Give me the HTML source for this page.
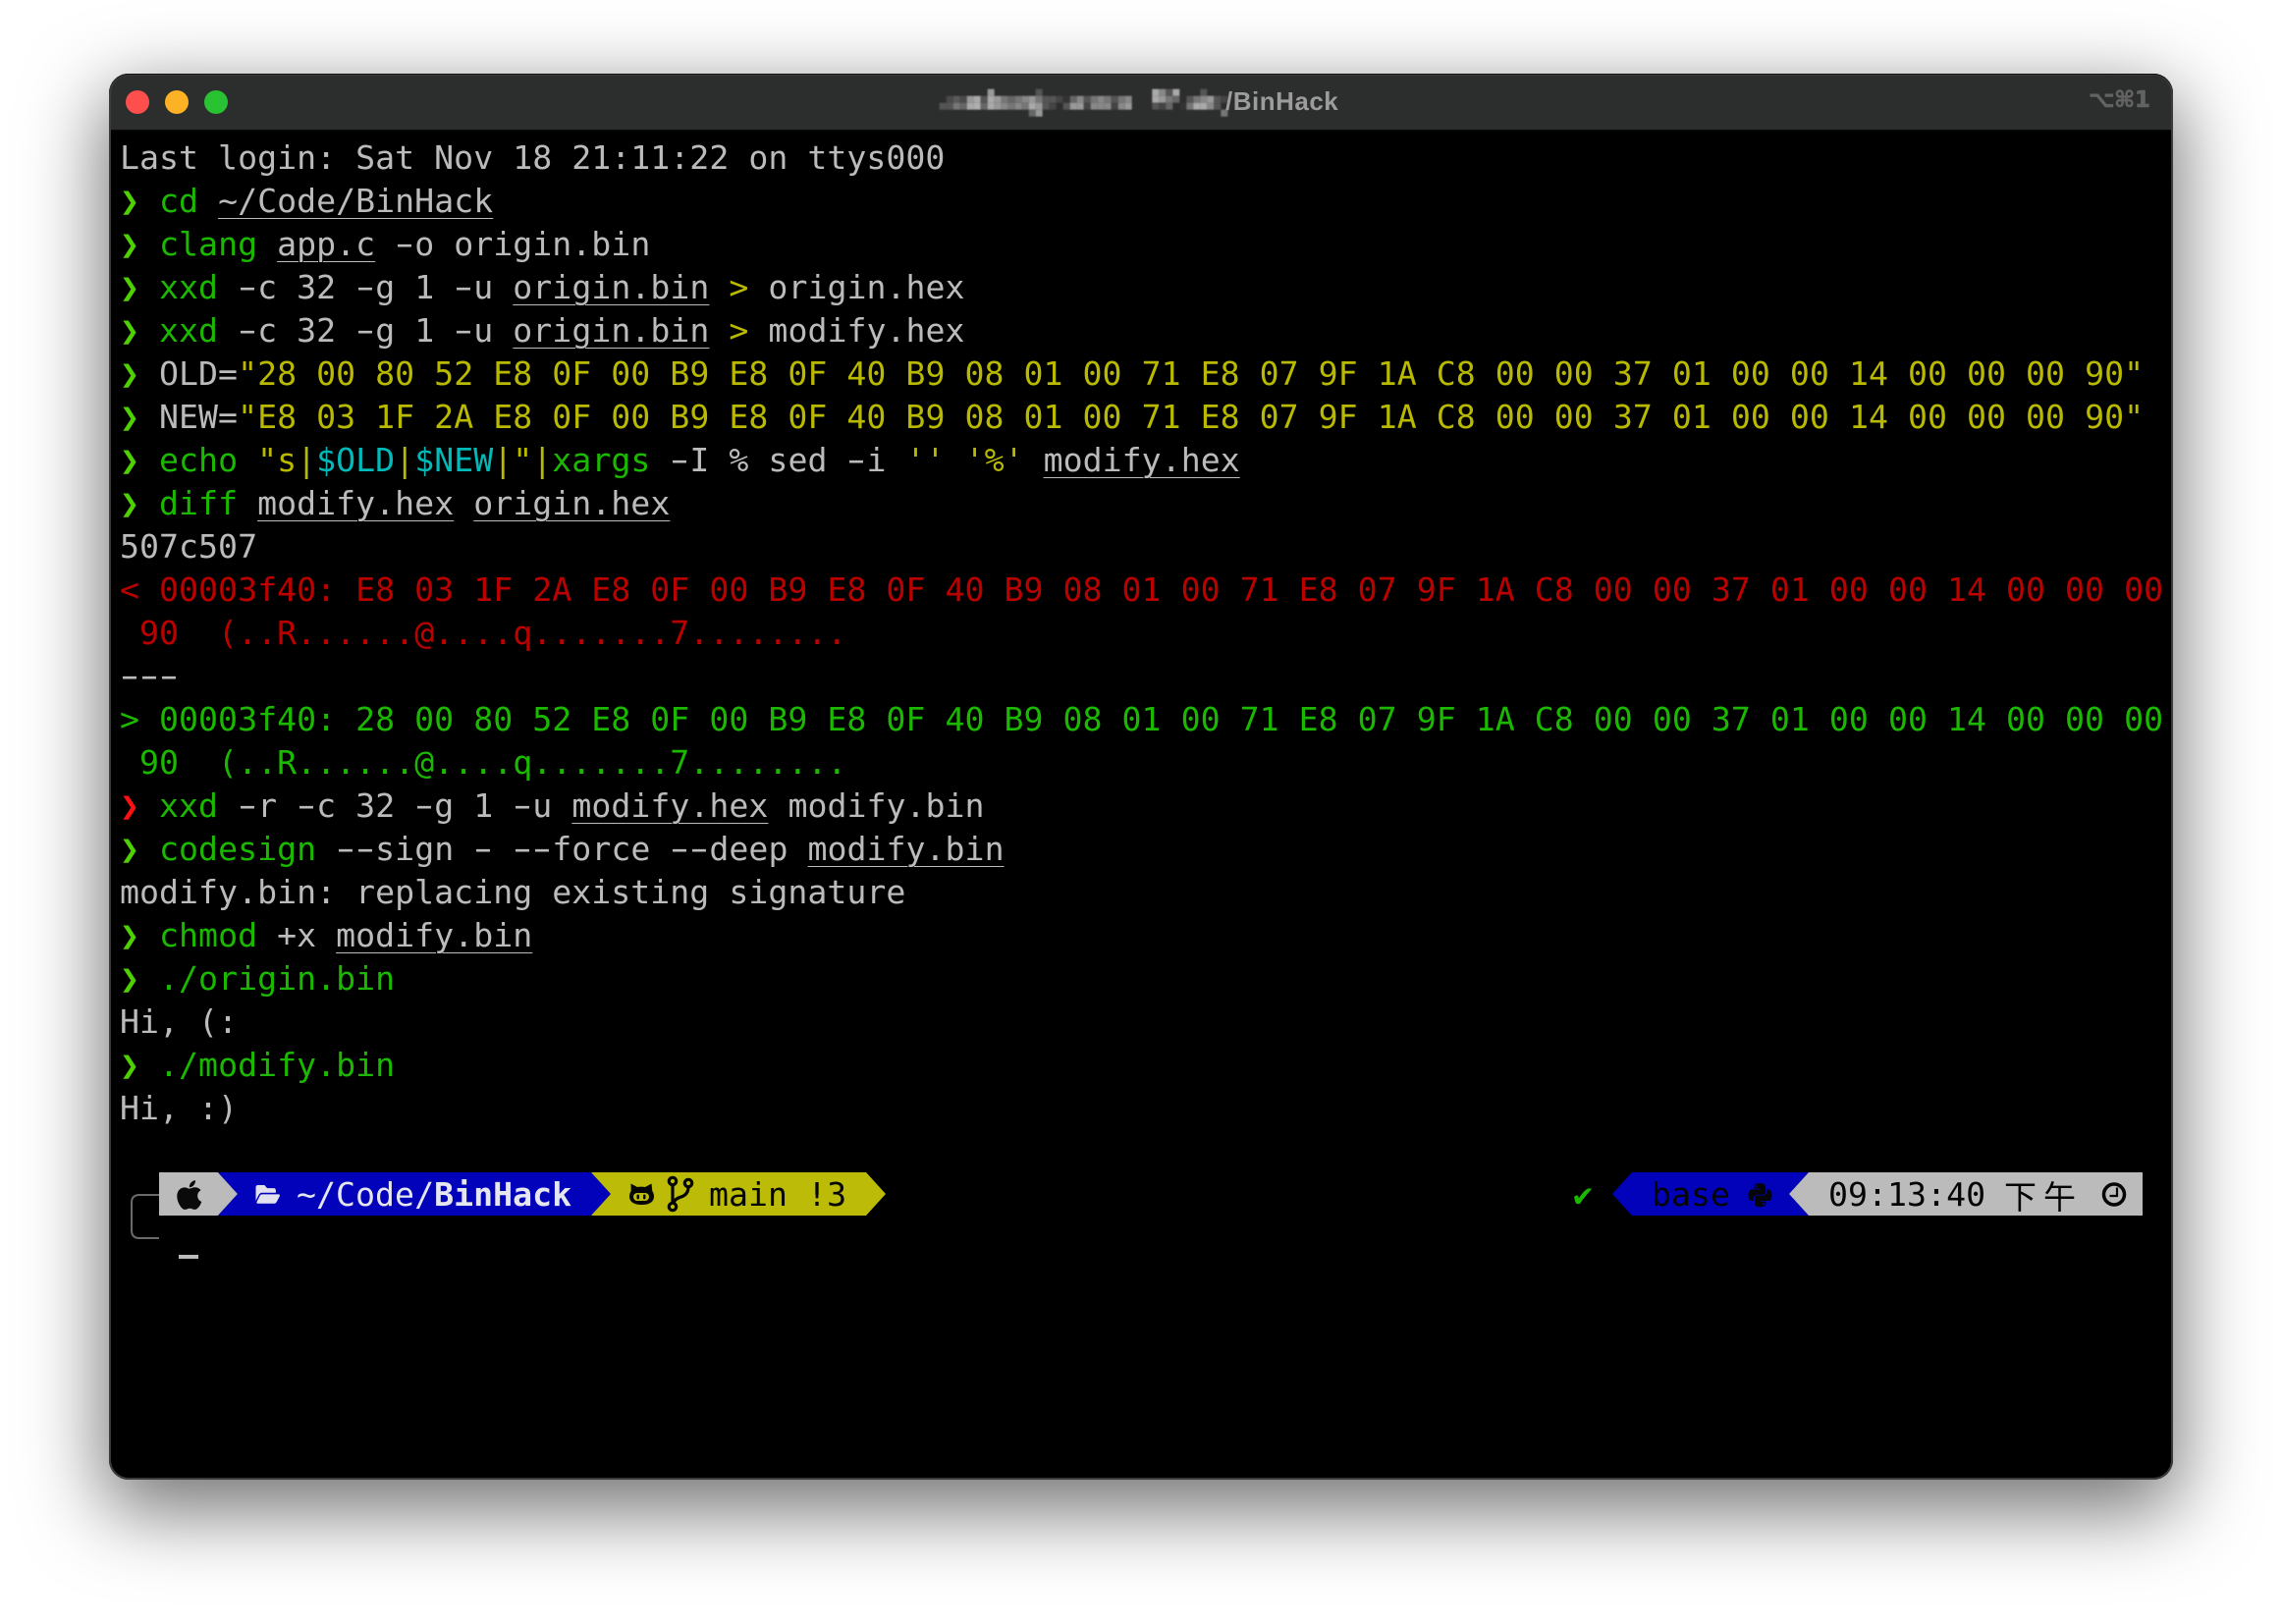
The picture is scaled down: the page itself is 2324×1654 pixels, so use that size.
<!DOCTYPE html>
<html lang="en"><head><meta charset="utf-8"><title>Terminal</title>
<style>
html,body{margin:0;padding:0;width:2324px;height:1654px;background:#fff;overflow:hidden}
#win{position:absolute;left:111px;top:75px;width:2102px;height:1432px;border-radius:20px;background:#000;box-shadow:0 26px 80px 6px rgba(0,0,0,.55)}
#bar{position:absolute;left:0;top:0;width:2102px;height:57px;background:#2c2d2d;border-radius:20px 20px 0 0;border-bottom:1px solid #0b0b0b;box-sizing:content-box}
#edge{position:absolute;left:0;top:0;width:2102px;height:1432px;border-radius:20px;box-shadow:inset 0 1px 0 #111,inset 0 0 0 2px #3b3b3b;pointer-events:none}
.dot{position:absolute;width:24px;height:24px;border-radius:50%;top:17px}
#title{position:absolute;left:1248px;top:86px;font:600 26px/34px "Liberation Sans",sans-serif;color:#9c9c9c;letter-spacing:.5px;white-space:pre}
#kbd{position:absolute;left:2127px;top:85px;font:700 23px/34px "DejaVu Sans","Liberation Sans",sans-serif;color:#626262;white-space:pre;letter-spacing:-.5px;-webkit-text-stroke:.6px #626262}
pre,.t{font-family:"DejaVu Sans Mono","Liberation Mono",monospace;font-size:33.2px;line-height:44px;letter-spacing:.03px;color:#bbb;margin:0;white-space:pre}
#term{position:absolute;left:122px;top:139px}
.t{position:absolute;top:1195px}
.g{color:#1bb800}.y{color:#b9b900}.r{color:#bb0000}.c{color:#00b9b9}
.p{color:#4fd000}.pr{color:#ff1010}
.u{text-decoration:underline;text-decoration-thickness:1px;text-underline-offset:6px}
i{font-style:normal;display:inline-block;transform:scaleX(1.65) translateY(-1px)}
.m rect{width:7px;height:7px}
svg{position:absolute;overflow:visible}
</style></head><body>
<div id="win">
<div id="bar"></div>
<div class="dot" style="left:17px;background:#ff4f4d"></div>
<div class="dot" style="left:57px;background:#fdb124"></div>
<div class="dot" style="left:97px;background:#28c232"></div>
<div id="edge"></div>
</div>

<svg class="m" style="left:0;top:0;filter:blur(.8px)" width="2324" height="140">
<g transform="translate(956.7,90.7)">
<rect x="49" y="0" fill="#999"/><rect x="98" y="0" fill="#555"/>
<rect x="7" y="7" fill="#4a4a4a"/><rect x="14" y="7" fill="#5a5a5a"/><rect x="21" y="7" fill="#4a4a4a"/><rect x="28" y="7" fill="#999"/><rect x="35" y="7" fill="#aaa"/><rect x="42" y="7" fill="#555"/><rect x="49" y="7" fill="#aaa"/><rect x="56" y="7" fill="#999"/><rect x="63" y="7" fill="#777"/><rect x="70" y="7" fill="#666"/><rect x="77" y="7" fill="#777"/><rect x="84" y="7" fill="#888"/><rect x="91" y="7" fill="#999"/><rect x="98" y="7" fill="#777"/><rect x="105" y="7" fill="#555"/><rect x="112" y="7" fill="#555"/><rect x="119" y="7" fill="#444"/><rect x="126" y="7" fill="#333"/><rect x="133" y="7" fill="#666"/><rect x="140" y="7" fill="#888"/><rect x="147" y="7" fill="#555"/><rect x="154" y="7" fill="#777"/><rect x="161" y="7" fill="#888"/><rect x="168" y="7" fill="#777"/><rect x="175" y="7" fill="#555"/><rect x="182" y="7" fill="#777"/><rect x="189" y="7" fill="#888"/>
<rect x="0" y="14" fill="#555"/><rect x="7" y="14" fill="#555"/><rect x="14" y="14" fill="#777"/><rect x="21" y="14" fill="#666"/><rect x="28" y="14" fill="#aaa"/><rect x="35" y="14" fill="#b0b0b0"/><rect x="42" y="14" fill="#666"/><rect x="49" y="14" fill="#aaa"/><rect x="56" y="14" fill="#999"/><rect x="63" y="14" fill="#888"/><rect x="70" y="14" fill="#777"/><rect x="77" y="14" fill="#888"/><rect x="84" y="14" fill="#777"/><rect x="91" y="14" fill="#aaa"/><rect x="98" y="14" fill="#999"/><rect x="105" y="14" fill="#555"/><rect x="112" y="14" fill="#444"/><rect x="126" y="14" fill="#555"/><rect x="133" y="14" fill="#999"/><rect x="140" y="14" fill="#999"/><rect x="147" y="14" fill="#444"/><rect x="154" y="14" fill="#888"/><rect x="161" y="14" fill="#888"/><rect x="168" y="14" fill="#888"/><rect x="175" y="14" fill="#444"/><rect x="182" y="14" fill="#888"/><rect x="189" y="14" fill="#999"/>
<rect x="91" y="21" fill="#666"/><rect x="98" y="21" fill="#999"/>
</g>
<g transform="translate(1173.3,90.7)">
<rect x="0" y="0" fill="#aaa"/><rect x="7" y="0" fill="#888"/><rect x="14" y="0" fill="#555"/><rect x="21" y="0" fill="#aaa"/><rect x="49" y="0" fill="#555"/>
<rect x="0" y="7" fill="#aaa"/><rect x="7" y="7" fill="#999"/><rect x="14" y="7" fill="#777"/><rect x="21" y="7" fill="#666"/><rect x="35" y="7" fill="#555"/><rect x="42" y="7" fill="#777"/><rect x="49" y="7" fill="#888"/><rect x="56" y="7" fill="#999"/><rect x="63" y="7" fill="#555"/><rect x="70" y="7" fill="#444"/>
<rect x="0" y="14" fill="#555"/><rect x="7" y="14" fill="#444"/><rect x="14" y="14" fill="#666"/><rect x="28" y="14" fill="#333"/><rect x="35" y="14" fill="#777"/><rect x="42" y="14" fill="#aaa"/><rect x="49" y="14" fill="#aaa"/><rect x="56" y="14" fill="#888"/><rect x="63" y="14" fill="#555"/>
<rect x="70" y="21" fill="#777"/>
</g>
</svg>
<div id="title">/BinHack</div>
<div id="kbd">⌥⌘1</div>

<pre id="term">Last login: Sat Nov 18 21:11:22 on ttys000
<b class="p">❯</b> <span class="g">cd</span> <span class="u">~/Code/BinHack</span>
<b class="p">❯</b> <span class="g">clang</span> <span class="u">app.c</span> <i>-</i>o origin.bin
<b class="p">❯</b> <span class="g">xxd</span> <i>-</i>c 32 <i>-</i>g 1 <i>-</i>u <span class="u">origin.bin</span> <span class="y">&gt;</span> origin.hex
<b class="p">❯</b> <span class="g">xxd</span> <i>-</i>c 32 <i>-</i>g 1 <i>-</i>u <span class="u">origin.bin</span> <span class="y">&gt;</span> modify.hex
<b class="p">❯</b> OLD=<span class="y">"28 00 80 52 E8 0F 00 B9 E8 0F 40 B9 08 01 00 71 E8 07 9F 1A C8 00 00 37 01 00 00 14 00 00 00 90"</span>
<b class="p">❯</b> NEW=<span class="y">"E8 03 1F 2A E8 0F 00 B9 E8 0F 40 B9 08 01 00 71 E8 07 9F 1A C8 00 00 37 01 00 00 14 00 00 00 90"</span>
<b class="p">❯</b> <span class="g">echo</span> <span class="y">"s|</span><span class="c">$OLD</span><span class="y">|</span><span class="c">$NEW</span><span class="y">|"|</span><span class="g">xargs</span> <i>-</i>I % sed <i>-</i>i <span class="y">'' '%'</span> <span class="u">modify.hex</span>
<b class="p">❯</b> <span class="g">diff</span> <span class="u">modify.hex</span> <span class="u">origin.hex</span>
507c507
<span class="r">&lt; 00003f40: E8 03 1F 2A E8 0F 00 B9 E8 0F 40 B9 08 01 00 71 E8 07 9F 1A C8 00 00 37 01 00 00 14 00 00 00
 90  (..R......@....q.......7........</span>
<i>-</i><i>-</i><i>-</i>
<span class="g">&gt; 00003f40: 28 00 80 52 E8 0F 00 B9 E8 0F 40 B9 08 01 00 71 E8 07 9F 1A C8 00 00 37 01 00 00 14 00 00 00
 90  (..R......@....q.......7........</span>
<b class="pr">❯</b> <span class="g">xxd</span> <i>-</i>r <i>-</i>c 32 <i>-</i>g 1 <i>-</i>u <span class="u">modify.hex</span> modify.bin
<b class="p">❯</b> <span class="g">codesign</span> <i>-</i><i>-</i>sign <i>-</i> <i>-</i><i>-</i>force <i>-</i><i>-</i>deep <span class="u">modify.bin</span>
modify.bin: replacing existing signature
<b class="p">❯</b> <span class="g">chmod</span> +x <span class="u">modify.bin</span>
<b class="p">❯</b> <span class="g">./origin.bin</span>
Hi, (:
<b class="p">❯</b> <span class="g">./modify.bin</span>
Hi, :)</pre>

<svg style="left:0;top:0" width="2324" height="1654">
<path d="M162 1217H142q-8 0-8 8v28q0 8 8 8h20" fill="none" stroke="#6a6a6a" stroke-width="2"/>
<rect x="182" y="1278" width="20" height="4" fill="#bbb"/>
<polygon points="162,1194 222,1194 242,1216 222,1238 162,1238" fill="#bbb"/>
<polygon points="222,1194 602,1194 622,1216 602,1238 222,1238 242,1216" fill="#0202bb"/>
<polygon points="602,1194 882,1194 902,1216 882,1238 602,1238 622,1216" fill="#bcbc08"/>
<polygon points="1642,1216 1662,1194 1842,1194 1822,1216 1842,1238 1662,1238" fill="#0202bb"/>
<polygon points="1822,1216 1842,1194 2182,1194 2182,1238 1842,1238" fill="#bbb"/>
<!-- apple -->
<g transform="translate(180,1200) scale(.0665,.0665)"><path fill="#0a0a0a" d="M318.7 268.7c-.2-36.7 16.4-64.4 50-84.8-18.8-26.9-47.2-41.7-84.7-44.6-35.5-2.8-74.3 20.7-88.5 20.7-15 0-49.4-19.7-76.4-19.7C63.3 141.2 4 184.8 4 273.5q0 39.3 14.4 81.2c12.8 36.7 59 126.7 107.2 125.2 25.2-.6 43-17.9 75.8-17.9 31.8 0 48.3 17.9 76.4 17.9 48.6-.7 90.4-82.5 102.6-119.3-65.2-30.7-61.7-90-61.7-91.9zm-56.6-164.2c27.3-32.4 24.8-61.9 24-72.5-24.1 1.4-52 16.4-67.9 34.9-17.5 19.8-27.8 44.3-25.6 71.9 26.1 2 49.9-11.4 69.5-34.3z"/></g>
<!-- folder -->
<g transform="translate(260.5,1203.9) scale(.0425,.0487)"><path fill="#e2e2ee" d="M572.694 292.093L500.27 416.248A63.997 63.997 0 0 1 444.989 448H45.025c-18.523 0-30.064-20.093-20.731-36.093l72.424-124.155A64 64 0 0 1 152 256h399.964c18.523 0 30.064 20.093 20.73 36.093zM152 224h328v-48c0-26.51-21.49-48-48-48H272l-64-64H48C21.49 64 0 85.49 0 112v278.046l69.077-118.418C86.214 242.25 117.989 224 152 224z"/></g>
<!-- octocat -->
<path fill="#050505" d="M642.5 1205.500l6.500 3.500q4-.8 8 0l6.500-3.500 .8 7.500q1.700 2.500 1.700 5.500c0 5.500-4.500 8.500-12.500 8.500s-12.500-3-12.500-8.500q0-3 1.700-5.500z"/>
<rect x="645" y="1215" width="16" height="8" rx="4" fill="#bcbc08"/>
<rect x="648.500" y="1216.500" width="2.500" height="5" rx="1.200" fill="#050505"/><rect x="655" y="1216.500" width="2.500" height="5" rx="1.200" fill="#050505"/>
<!-- branch -->
<g fill="none" stroke="#050505" stroke-width="3.200">
<circle cx="685" cy="1203" r="3.700"/><circle cx="701" cy="1205" r="3.700"/><circle cx="685" cy="1229" r="3.700"/>
<path d="M685 1206.700V1225.300"/><path d="M701 1208.700c0 6-3 9-8 10.500q-6 2-7 6"/>
</g>
<!-- python -->
<g transform="translate(1780.500,1203.500) scale(.0536)"><path fill="#050505" d="M439.800 200.500c-7.700-30.900-22.300-54.200-53.400-54.200h-40.100v47.400c0 36.800-31.200 67.800-66.800 67.800H172.700c-29.200 0-53.400 25-53.400 54.300v101.800c0 29 25.200 46 53.400 54.300 33.800 9.900 66.300 11.700 106.800 0 26.900-7.800 53.400-23.500 53.400-54.300v-40.700H226.200v-13.600h160.200c31.100 0 42.600-21.700 53.400-54.200 11.200-33.500 10.700-65.700 0-108.600zM286.200 404c11.100 0 20.100 9.100 20.100 20.300 0 11.300-9 20.500-20.100 20.500-11 0-20.100-9.200-20.100-20.500.1-11.300 9.100-20.300 20.100-20.300zM167.800 248.100h106.800c29.700 0 53.400-24.500 53.400-54.300V91.900c0-29-24.400-50.700-53.400-55.600-35.800-5.900-74.700-5.600-106.800.1-45.200 8-53.400 24.700-53.400 55.600v40.700h106.900v13.600h-147c-31.100 0-58.300 18.700-66.800 54.200-9.800 40.700-10.200 66.100 0 108.600 7.600 31.600 25.700 54.200 56.800 54.200H101v-48.800c0-35.300 30.500-66.400 66.800-66.400zm-6.700-142.600c-11.100 0-20.100-9.100-20.100-20.300.1-11.300 9-20.500 20.100-20.500 11 0 20.100 9.200 20.100 20.500s-9 20.300-20.100 20.300z"/></g>
<!-- clock -->
<circle cx="2153" cy="1216.500" r="10.500" fill="none" stroke="#050505" stroke-width="3.500"/>
<path d="M2156 1209.500V1218H2148.500" fill="none" stroke="#050505" stroke-width="2.200"/>
</svg>

<div class="t" style="left:302px;color:#e6e6ee">~/Code/<b>BinHack</b></div>
<div class="t" style="left:722px;color:#050505">main !3</div>
<div class="t" style="left:1602px;color:#1bb800">✔</div>
<div class="t" style="left:1682px;color:#050505">base</div>
<div class="t" style="left:1862px;color:#050505">09:13:40</div>
<div class="t" style="left:2041px;color:#050505;font-family:'Noto Sans CJK SC','DejaVu Sans Mono',sans-serif;letter-spacing:7px;font-size:33px">下午</div>
</body></html>
